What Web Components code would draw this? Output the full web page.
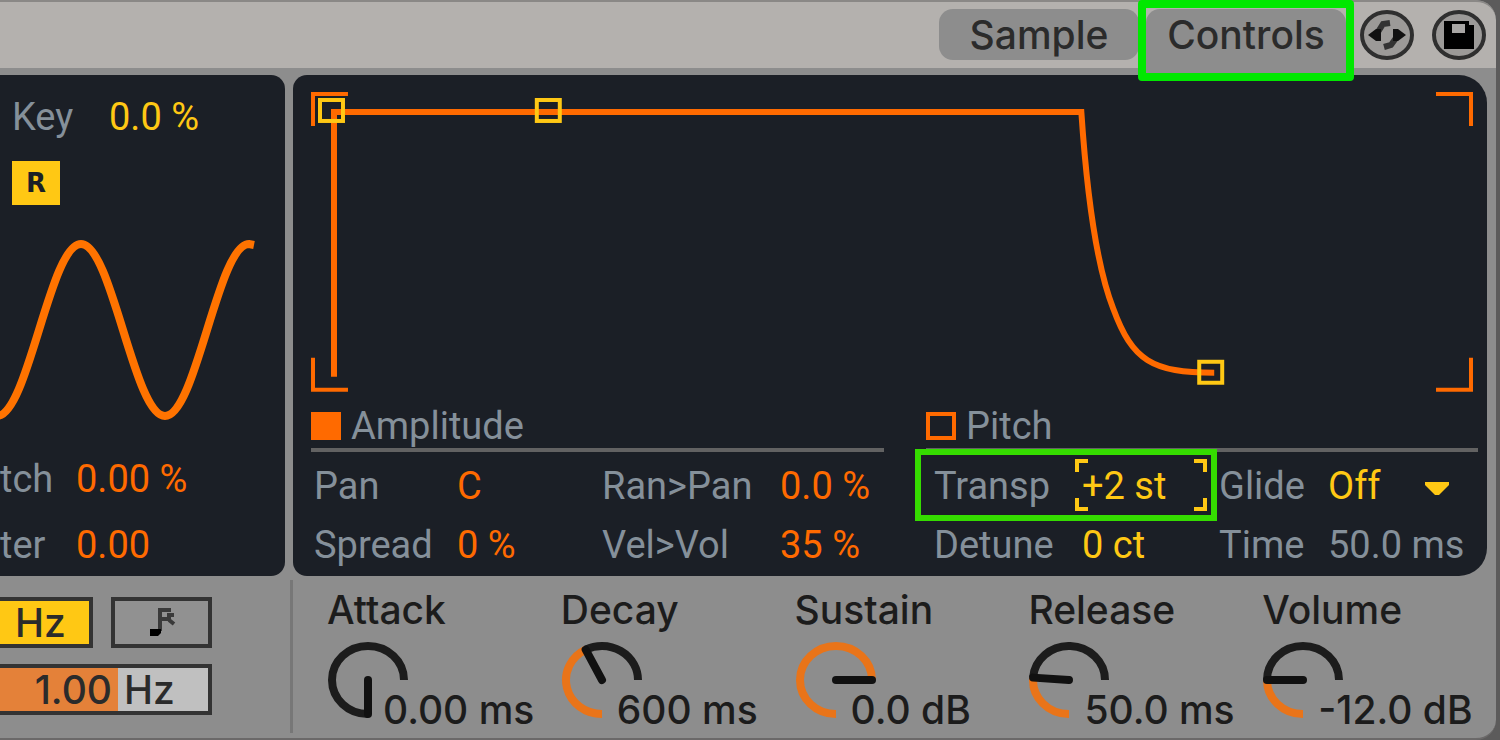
<!DOCTYPE html>
<html lang="en">
<head>
<meta charset="utf-8">
<title>Sampler device</title>
<style>
  html, body { height: 100%; margin: 0; }
  body { background: #5c5b5b; font-family: Inter, "Liberation Sans", sans-serif; font-weight: 500; }
</style>
</head>
<body>
<sampler-device></sampler-device>

<script>
const SHARED = `
  *, *::before, *::after { box-sizing: border-box; }
  button, input, select { font: inherit; color: inherit; margin: 0; padding: 0; border: 0; background: none; border-radius: 0; }
`;

function define(name, html, setup) {
  customElements.define(name, class extends HTMLElement {
    constructor() {
      super();
      this.attachShadow({ mode: "open" });
    }

    connectedCallback() {
      this.shadowRoot.innerHTML = `<style>${SHARED}</style>` + (typeof html === "function" ? html(this) : html);
      if (setup) {
        setup(this);
      }
    }
  });
}

define("device-tab", (el) => `
  <style>
    :host { display: block; position: relative; width: 200px; }
    button { display: block; width: 100%; height: 51px; border-radius: 14px; background: #8d8d8d; color: #2b2b2b; font-size: 39px; line-height: 51px; }
    :host([active]) button { height: 59px; padding-bottom: 8px; border-radius: 14px 14px 0 0; }
    .mark { position: absolute; inset: -9px -8px -13px; border: 8px solid #00e800; border-radius: 4px; pointer-events: none; }
    :host(:not([active])) .mark { display: none; }
  </style>
  <button type="button" role="tab" aria-selected="${el.hasAttribute("active")}"><slot></slot></button>
  <div class="mark"></div>
`);

define("icon-button", (el) => `
  <style>
    :host { display: block; }
    button { display: block; width: 54px; height: 52px; }
    ::slotted(svg) { display: block; }
  </style>
  <button type="button" aria-label="${el.getAttribute("label")}"><slot></slot></button>
`);

define("device-header", `
  <style>
    :host { display: flex; height: 68px; padding: 7px 10px 0 0; border-top: 2px solid #8a8886; border-radius: 0 20px 0 0; background: #b4b1ae; justify-content: flex-end; align-items: flex-start; }
    .tabs { display: flex; gap: 7px; margin-right: 14px; }
    .icons { display: flex; gap: 18px; }
  </style>
  <div class="tabs" role="tablist">
    <device-tab>Sample</device-tab>
    <device-tab active>Controls</device-tab>
  </div>
  <div class="icons">
    <icon-button label="Hot-swap">
      <svg width="54" height="52" viewBox="0 0 54 52">
        <ellipse cx="27" cy="26" rx="25" ry="23" fill="#9c9a98" stroke="#2f2f2f" stroke-width="4"/>
        <path d="M18 23L23 15L30 14 M36 29L31 36L24 38" fill="none" stroke="#333" stroke-width="6"/>
        <path d="M8 26L16 20H21V32H16Z M46 26L38 20H33V32H38Z" fill="#111"/>
      </svg>
    </icon-button>
    <icon-button label="Save preset">
      <svg width="54" height="52" viewBox="0 0 54 52">
        <ellipse cx="27" cy="26" rx="25" ry="23" fill="#9c9a98" stroke="#2f2f2f" stroke-width="4"/>
        <path d="M12 12H37V16H42V40H12Z" fill="#000"/>
        <path d="M20 15H33V24H20Z" fill="#a8a6a4"/>
      </svg>
    </icon-button>
  </div>
`);

define("param-field", (el) => `
  <style>
    :host { display: block; position: relative; color: #ff6a00; font-family: Roboto, "Liberation Sans", sans-serif; font-size: 38px; font-weight: 400; line-height: 59px; }
    :host([tone="yellow"]) { color: #ffc814; }
    :host([tone="grey"]) { color: #85909a; }
    .row { display: grid; grid-template-columns: var(--label-width, 76px) minmax(0, 1fr); }
    label { color: #85909a; white-space: nowrap; }
    input, select { display: block; width: 100%; height: 59px; appearance: none; outline: 0; }
    .menu { position: relative; }
    .menu svg { position: absolute; right: 29px; top: 25px; pointer-events: none; }
    .focus { position: absolute; left: 141px; top: 2px; pointer-events: none; }
    .mark { position: absolute; left: -19px; top: -8px; width: 302px; height: 72px; border: 6px solid #35dc00; pointer-events: none; }
  </style>
  <div class="row">
    <label for="value">${el.getAttribute("label")}</label>
    ${el.hasAttribute("menu")
      ? `<div class="menu"><select id="value"><option>${el.getAttribute("value")}</option></select>
         <svg width="24" height="14" viewBox="0 0 24 14"><path d="M0 0H24V3L14 13H10L0 3Z" fill="#ffc814"/></svg></div>`
      : `<input id="value" type="text" value="${el.getAttribute("value")}">`}
  </div>
  ${el.hasAttribute("marked")
    ? `<svg class="focus" width="132" height="52" viewBox="0 0 132 52"><path d="M2 13V2H13 M119 2H130V13 M130 39V50H119 M13 50H2V39" fill="none" stroke="#ffc814" stroke-width="4"/></svg>
       <div class="mark"></div>`
    : ""}
`);

define("param-group", `
  <style>
    :host { display: block; }
    .head { height: 45px; padding-bottom: 5px; border-bottom: 4px solid #626262; }
    .fields { display: grid; grid-template-columns: var(--first-column) minmax(0, 1fr); padding: 5px 0 0 var(--inset); }
  </style>
  <div class="head"><slot name="head"></slot></div>
  <div class="fields"><slot></slot></div>
`);

define("envelope-graph", `
  <style>
    :host { display: block; }
    svg { display: block; width: 100%; height: auto; }
  </style>
  <svg viewBox="0 0 1164 302" role="img" aria-label="Amplitude envelope">
    <g fill="none" stroke="#ff6a00">
      <path stroke-width="4" d="M2 35V3H37 M1126 3H1161V35 M1161 267V299H1126 M37 299H2V267"/>
      <path stroke-width="6" d="M23 286V21H771C777 110 788 180 803 218C822 270 842 282 904 282"/>
    </g>
    <g fill="none" stroke="#ffc814" stroke-width="4">
      <rect x="9" y="9" width="23" height="21"/>
      <rect x="226" y="9" width="23" height="21"/>
      <rect x="889" y="271" width="23" height="21"/>
    </g>
  </svg>
`);

define("envelope-panel", `
  <style>
    :host { display: block; padding: 16px 9px 1px 18px; border-radius: 14px 28px 28px 14px; background: #1b1f26; color: #85909a; font-family: Roboto, "Liberation Sans", sans-serif; font-size: 38px; font-weight: 400; }
    envelope-graph { margin-right: 4px; }
    .groups { display: grid; grid-template-columns: 573fr 552fr; gap: 42px; margin-top: 14px; }
    .amplitude { --first-column: 288px; --inset: 3px; }
    .pitch { --first-column: 285px; --inset: 8px; }
    label { display: flex; align-items: center; gap: 10px; height: 38px; }
    input { appearance: none; width: 30px; height: 28px; border: 4px solid #ff6a00; }
    input:checked { background: #ff6a00; }
  </style>
  <envelope-graph></envelope-graph>
  <div class="groups">
    <param-group class="amplitude">
      <label slot="head"><input type="radio" name="target" checked>Amplitude</label>
      <param-field label="Pan" value="C" style="--label-width: 143px"></param-field>
      <param-field label="Ran&gt;Pan" value="0.0 %" style="--label-width: 178px"></param-field>
      <param-field label="Spread" value="0 %" style="--label-width: 143px"></param-field>
      <param-field label="Vel&gt;Vol" value="35 %" style="--label-width: 178px"></param-field>
    </param-group>
    <param-group class="pitch">
      <label slot="head"><input type="radio" name="target">Pitch</label>
      <param-field label="Transp" value="+2 st" tone="yellow" marked style="--label-width: 148px"></param-field>
      <param-field label="Glide" value="Off" tone="yellow" menu style="--label-width: 109px"></param-field>
      <param-field label="Detune" value="0 ct" tone="yellow" style="--label-width: 148px"></param-field>
      <param-field label="Time" value="50.0 ms" tone="grey" style="--label-width: 109px"></param-field>
    </param-group>
  </div>
`);

define("lfo-panel", `
  <style>
    :host { display: flex; flex-direction: column; border-radius: 0 14px 14px 0; background: #1b1f26; overflow: hidden; }
    .key { --label-width: 97px; margin: 13px 0 0 12px; }
    button { width: 48px; height: 44px; margin: 14px 0 0 12px; background: #ffc814; color: #1b1f26; font: bold 26px/44px "DejaVu Sans", sans-serif; }
    .wave { display: block; width: 100%; height: auto; margin-top: 25px; }
    .cut { --label-width: 76px; margin-top: auto; padding-bottom: 1px; }
    .cut param-field + param-field { margin-top: 7px; }
  </style>
  <param-field class="key" label="Key" value="0.0 %" tone="yellow"></param-field>
  <button type="button" aria-label="Retrigger">R</button>
  <svg class="wave" viewBox="0 0 285 200" role="img" aria-label="Sine wave">
    <path d="M-3 186C28 186 50 14 81 14S134 186 165 186S218 14 249 14L254 15" fill="none" stroke="#ff7300" stroke-width="8"/>
  </svg>
  <div class="cut">
    <param-field label="tch" value="0.00 %"></param-field>
    <param-field label="ter" value="0.00"></param-field>
  </div>
`);

define("rate-controls", `
  <style>
    :host { display: flex; flex-direction: column; gap: 16px; padding-right: 78px; color: #2b2b2b; font-size: 39px; }
    .units { display: flex; gap: 18px; }
    button, .rate { height: 51px; border: 4px solid #333; }
    .hz { flex: 1; padding-right: 8px; border-left: 0; background: #ffc814; line-height: 43px; }
    .note { display: grid; width: 101px; place-items: center; background: #919191; }
    .rate { display: flex; border-left: 0; background: #c0c0c0; line-height: 43px; }
    .rate input { flex: 4; min-width: 0; padding-right: 6px; background: #e48139; text-align: right; outline: 0; }
    .rate label { flex: 3; padding-left: 6px; }
  </style>
  <div class="units">
    <button class="hz" type="button">Hz</button>
    <button class="note" type="button" aria-label="Sync to tempo">
      <svg width="28" height="30" viewBox="0 0 28 30">
        <path d="M12 24V3H23 M14 12H21V8H26 M21 13L26 17" fill="none" stroke="#3a3a3a" stroke-width="4"/>
        <path d="M2 22H13V26L10 29H2Z" fill="#000"/>
      </svg>
    </button>
  </div>
  <div class="rate">
    <input id="rate" type="text" value="1.00">
    <label for="rate">Hz</label>
  </div>
`);

define("device-knob", (el) => `
  <style>
    :host { display: block; color: #1c1c1c; font-size: 39px; line-height: 44px; }
    label { display: block; }
    .dial { display: flex; align-items: flex-end; position: relative; margin-top: 10px; }
    svg { display: block; flex: none; }
    input { position: absolute; left: 0; top: 0; width: 82px; height: 78px; opacity: 0; }
    output { margin: 0 0 -12px -26px; white-space: nowrap; }
  </style>
  <label for="knob">${el.getAttribute("label")}</label>
  <div class="dial">
    <svg width="82" height="78" viewBox="0 0 82 78" fill="none" stroke-width="8"></svg>
    <input id="knob" type="range" min="0" max="270" value="${el.getAttribute("angle")}">
    <output for="knob">${el.getAttribute("value")}</output>
  </div>
`, (el) => {
  const svg = el.shadowRoot.querySelector("svg");
  const input = el.shadowRoot.querySelector("input");
  const draw = () => {
    const angle = Number(input.value);
    const [x, y] = dialPoint(angle);
    svg.innerHTML = `
      <path d="${dialArc(angle, 270)}" stroke="#1c1c1c"/>
      <path d="${dialArc(0, angle)}" stroke="#e97419"/>
      <path d="M41 38L${x} ${y}" stroke="#111" stroke-linecap="round"/>`;
  };
  input.addEventListener("input", draw);
  draw();
});

// Degrees run clockwise from the bottom of the dial.
function dialPoint(angle) {
  const a = angle * Math.PI / 180;
  return [41 - 36 * Math.sin(a), 38 + 34 * Math.cos(a)];
}

function dialArc(from, to) {
  if (from === to) {
    return "";
  }
  return `M${dialPoint(from).join(" ")}A36 34 0 ${to - from > 180 ? 1 : 0} 1 ${dialPoint(to).join(" ")}`;
}

define("sampler-device", `
  <style>
    :host { display: flex; flex-direction: column; min-height: 738px; margin-right: 4px; border-bottom: 2px solid #6b6969; border-radius: 0 20px 20px 0; background: #8d8d8d; overflow: hidden; }
    main { display: grid; grid-template-columns: 285px minmax(0, 1fr); column-gap: 8px; padding: 7px 9px 0 0; }
    rate-controls { margin-top: 21px; margin-right: -5px; }
    .knobs { display: grid; grid-template-columns: repeat(5, minmax(0, 1fr)); margin: 4px -9px 0 -3px; padding: 8px 0 0 34px; border-left: 3px solid #777; height: 153px; }
  </style>
  <device-header></device-header>
  <main>
    <lfo-panel></lfo-panel>
    <envelope-panel></envelope-panel>
    <rate-controls></rate-controls>
    <div class="knobs">
      <device-knob label="Attack" value="0.00 ms" angle="0"></device-knob>
      <device-knob label="Decay" value="600 ms" angle="153"></device-knob>
      <device-knob label="Sustain" value="0.0 dB" angle="270"></device-knob>
      <device-knob label="Release" value="50.0 ms" angle="94"></device-knob>
      <device-knob label="Volume" value="-12.0 dB" angle="90"></device-knob>
    </div>
  </main>
`);
</script>
</body>
</html>
